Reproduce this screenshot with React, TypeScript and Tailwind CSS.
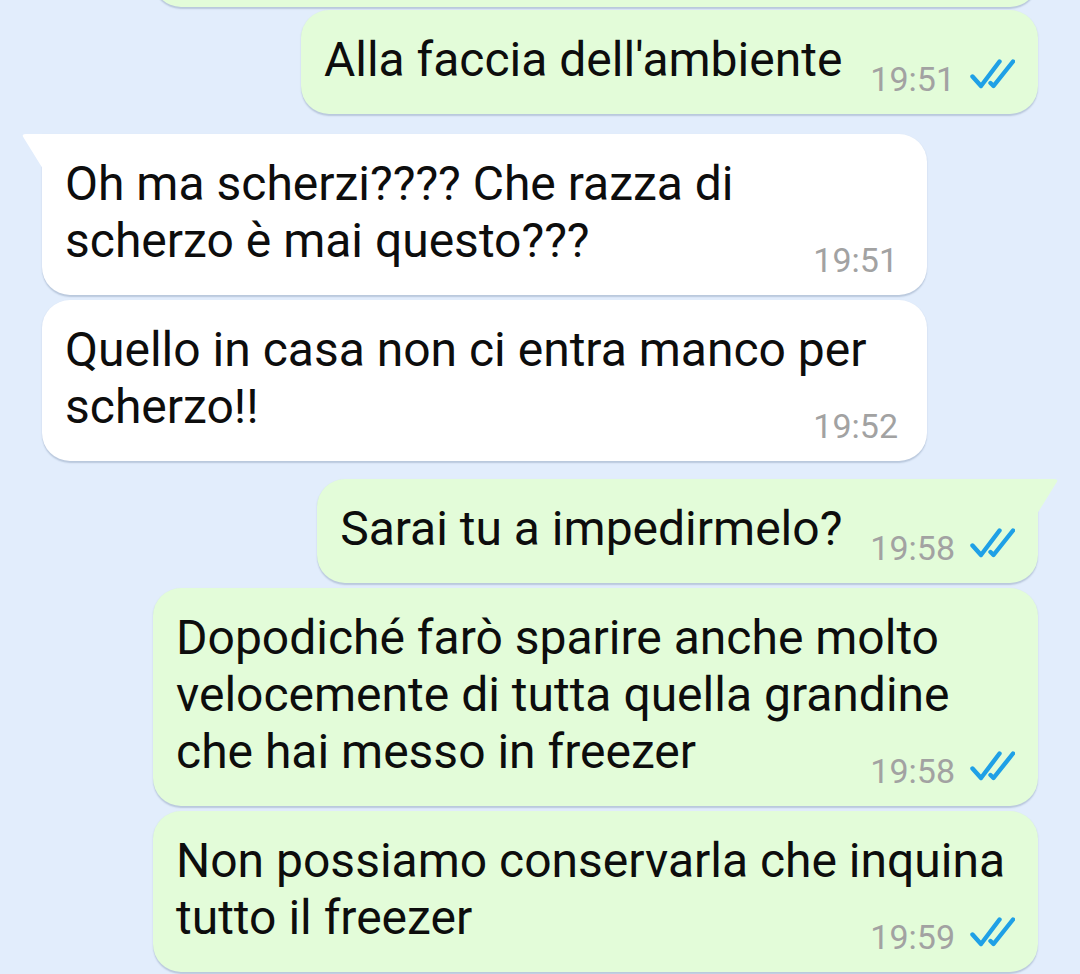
import React from "react";

type Msg = {
  lines: string[];
  time: string;
  out: boolean;
  tail?: boolean;
};

const messages: Msg[] = [
  { lines: ["Alla faccia dell'ambiente"], time: "19:51", out: true },
  { lines: ["Oh ma scherzi???? Che razza di", "scherzo è mai questo???"], time: "19:51", out: false, tail: true },
  { lines: ["Quello in casa non ci entra manco per", "scherzo!!"], time: "19:52", out: false },
  { lines: ["Sarai tu a impedirmelo?"], time: "19:58", out: true, tail: true },
  {
    lines: ["Dopodiché farò sparire anche molto", "velocemente di tutta quella grandine", "che hai messo in freezer"],
    time: "19:58",
    out: true,
  },
  { lines: ["Non possiamo conservarla che inquina", "tutto il freezer"], time: "19:59", out: true },
];

function Ticks() {
  return (
    <svg width="46" height="30" viewBox="0 0 46 30" fill="none" className="mb-[10px] shrink-0">
      <polyline points="3.5,17.5 12,27 30.5,2.5" stroke="#1fa0e6" strokeWidth="4.4" strokeLinecap="round" strokeLinejoin="round" />
      <polyline points="21.5,24 24.5,27 44,2.5" stroke="#1fa0e6" strokeWidth="4.4" strokeLinecap="round" strokeLinejoin="round" />
    </svg>
  );
}

function Bubble({ msg }: { msg: Msg }) {
  const { out, tail } = msg;
  const wide = msg.lines.length > 1;
  return (
    <div
      className={
        "relative flow-root max-w-[885px] pl-[23px] pt-[21px] pb-[15px] text-[48px] leading-[57px] text-[#0d0d0d] shadow-[0_1.5px_1.5px_rgba(40,70,110,0.22)] rounded-[28px] " +
        (wide ? "w-[885px] " : "") +
        (out
          ? "self-end mr-[42px] bg-[#e3fcd9] pr-[23px] " + (tail ? "rounded-tr-none" : "")
          : "self-start ml-[42px] bg-white pr-[29px] " + (tail ? "rounded-tl-none" : ""))
      }
    >
      {tail && out && (
        <svg width="22" height="35" viewBox="0 0 22 35" className="absolute top-0 -right-[21px]">
          <path d="M0 0 H17 Q22 0 19.5 3.6 L0 35 Z" fill="#e3fcd9" />
        </svg>
      )}
      {tail && !out && (
        <svg width="22" height="35" viewBox="0 0 22 35" className="absolute top-0 -left-[21px]">
          <path d="M22 0 H5 Q0 0 2.5 3.6 L22 35 Z" fill="#ffffff" />
        </svg>
      )}
      {msg.lines.map((l, i) => (
        <React.Fragment key={i}>
          {i > 0 && <br />}
          {l}
        </React.Fragment>
      ))}
      <span className="float-right ml-[28px] mt-[28px] flex h-[40px] items-center gap-[14px] text-[34px] leading-[40px] text-[#a2a2a2]">
        {msg.time}
        {out && <Ticks />}
      </span>
    </div>
  );
}

export default function App() {
  return (
    <div
      className="flex h-[974px] w-full flex-col overflow-hidden bg-[#e2edfc]"
      style={{ fontFamily: "Roboto, 'Noto Sans', sans-serif" }}
    >
      <div className="-mt-[60px] mr-[42px] h-[67px] w-[885px] shrink-0 self-end rounded-[28px] bg-[#e3fcd9] shadow-[0_1.5px_1.5px_rgba(40,70,110,0.22)]" />
      <div className="mt-[3px] flex flex-col">
        <Bubble msg={messages[0]} />
        <div className="mt-[20px]" />
        <Bubble msg={messages[1]} />
        <div className="mt-[5px]" />
        <Bubble msg={messages[2]} />
        <div className="mt-[18px]" />
        <Bubble msg={messages[3]} />
        <div className="mt-[5px]" />
        <Bubble msg={messages[4]} />
        <div className="mt-[5px]" />
        <Bubble msg={messages[5]} />
      </div>
    </div>
  );
}
